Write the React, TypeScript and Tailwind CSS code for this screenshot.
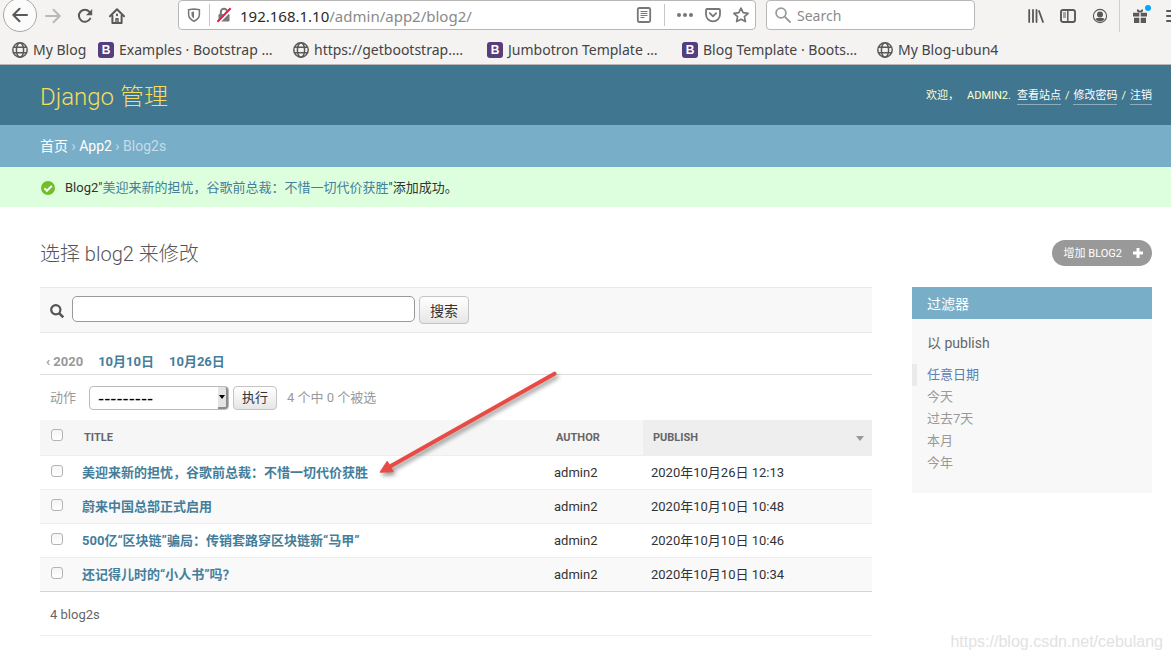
/**
 * Django admin change list, shown inside a browser window.
 */

import React, { useState } from 'react'

interface Bookmark {
    label: string
    icon: 'globe' | 'bootstrap'
    width: string
}

interface BlogRow {
    id: number
    title: string
    author: string
    publish: string
}

const bookmarks: Bookmark[] = [
    { label: 'My Blog', icon: 'globe', width: 'w-[86px]' },
    { label: 'Examples · Bootstrap …', icon: 'bootstrap', width: 'w-[195px]' },
    { label: 'https://getbootstrap.…', icon: 'globe', width: 'w-[194px]' },
    { label: 'Jumbotron Template …', icon: 'bootstrap', width: 'w-[195px]' },
    { label: 'Blog Template · Boots…', icon: 'bootstrap', width: 'w-[195px]' },
    { label: 'My Blog-ubun4', icon: 'globe', width: 'w-[130px]' }
]

const rows: BlogRow[] = [
    { id: 4, title: '美迎来新的担忧，谷歌前总裁：不惜一切代价获胜', author: 'admin2', publish: '2020年10月26日 12:13' },
    { id: 3, title: '蔚来中国总部正式启用', author: 'admin2', publish: '2020年10月10日 10:48' },
    { id: 2, title: '500亿“区块链”骗局：传销套路穿区块链新“马甲”', author: 'admin2', publish: '2020年10月10日 10:46' },
    { id: 1, title: '还记得儿时的“小人书”吗？', author: 'admin2', publish: '2020年10月10日 10:34' }
]

const dateFilters = ['任意日期', '今天', '过去7天', '本月', '今年']

const checkboxClass =
    'block size-3 appearance-none rounded-[3px] border border-[#b4b4b4] bg-gradient-to-b from-[#f4f4f4] to-white checked:bg-none checked:bg-[#417690]'

const greyButtonClass =
    'shrink-0 rounded border border-[#c4c4c4] bg-gradient-to-b from-white to-[#e6e6e6] text-[#333]'

function GlobeIcon() {
    return (
        <svg className="size-4 shrink-0" viewBox="0 0 16 16" fill="none" stroke="#5a5957" strokeWidth="1.5">
            <circle cx="8" cy="8" r="7.2" />
            <ellipse cx="8" cy="8" rx="3.6" ry="7.2" />
            <path d="M1.6 5.2h12.8M1.6 10.8h12.8" />
        </svg>
    )
}

function BootstrapIcon() {
    return (
        <span className="flex size-4 shrink-0 items-center justify-center rounded-[3px] bg-[#563d7c] font-['Liberation_Sans'] text-xs leading-4 font-bold text-white">
            B
        </span>
    )
}

function NavButton({ label, children }: { label: string; children: React.ReactNode }) {
    return (
        <button aria-label={label} className="flex h-8 w-8 shrink-0 items-center justify-center">
            {children}
        </button>
    )
}

function BrowserBar() {
    const [search, setSearch] = useState('')

    return (
        <div className="overflow-hidden border-b border-[#b9b6b3] bg-[#f4f3f2] font-['Noto_Sans',sans-serif] text-[#444]">
            {/* Navigation toolbar */}
            <div className="flex h-[34px] items-start">
                <button
                    aria-label="Back"
                    className="-mt-0.5 ml-[3px] flex size-[34px] shrink-0 items-center justify-center rounded-full border border-[#aaa8a5] bg-[#fbfbfb]"
                >
                    <svg className="size-4" viewBox="0 0 16 16" fill="none" stroke="#5a5957" strokeWidth="2" strokeLinecap="round" strokeLinejoin="round">
                        <path d="M15 8H1.5M7.5 1.8 1.3 8l6.2 6.2" />
                    </svg>
                </button>
                <NavButton label="Forward">
                    <svg className="size-4" viewBox="0 0 16 16" fill="none" stroke="#b9b8b6" strokeWidth="2" strokeLinecap="round" strokeLinejoin="round">
                        <path d="M1 8h13.5M8.5 1.8 14.7 8l-6.2 6.2" />
                    </svg>
                </NavButton>
                <NavButton label="Reload">
                    <svg className="size-4" viewBox="0 0 16 16" fill="none" stroke="#5a5957" strokeWidth="2" strokeLinecap="round">
                        <path d="M13.2 10.6A6 6 0 1 1 12.4 3.8" />
                        <path d="M15.2 1v6.2H9z" fill="#5a5957" stroke="none" />
                    </svg>
                </NavButton>
                <NavButton label="Home">
                    <svg className="size-4" viewBox="0 0 16 16" fill="none" stroke="#5a5957" strokeWidth="2" strokeLinecap="round" strokeLinejoin="round">
                        <path d="M1 8.2 8 1.3l7 6.9" />
                        <path d="M3.4 7.8V15h9.2V7.8" />
                        <path d="M7 15v-4.2h2V15" strokeWidth="1.4" />
                        <path d="M8 6.6v.6" />
                    </svg>
                </NavButton>

                <div className="ml-[45px] flex h-[30px] flex-1 items-center rounded border border-[#b9b7b5] bg-white">
                    <svg className="ml-2 size-3.5 shrink-0" viewBox="0 0 14 14" fill="none">
                        <path d="M1.6 1.7C4 1.5 5.5 1 7 .9c1.5.1 3 .6 5.4.8v4.5c0 3.2-2 5.4-5.4 7-3.4-1.6-5.4-3.8-5.4-7z" stroke="#777" strokeWidth="1.5" />
                        <path d="M7 3.6v7c-1.6-1-2.5-2.3-2.5-4.3V4.1z" fill="#777" />
                    </svg>
                    <span className="mr-1.5 ml-2 h-[22px] w-px bg-[#c9c7c5]" />
                    <svg className="size-4 shrink-0" viewBox="0 0 16 16" fill="none">
                        <path d="M4.8 8V5a3.2 3.2 0 0 1 6.4 0v3" stroke="#777" strokeWidth="2" />
                        <rect x="2.5" y="7" width="11" height="7.5" rx="1.2" fill="#777" />
                        <path d="M2 15.5 15.5 1.5" stroke="#fff" strokeWidth="3.4" />
                        <path d="M1.500 14.8 14.6 1.2" stroke="#e8174b" strokeWidth="2" />
                    </svg>
                    <span className="ml-2 flex-1 pt-0.5 text-[15px] leading-5 whitespace-nowrap text-[#8a8a8a]">
                        <span className="text-[#2b2b2b]">192.168.1.10</span>/admin/app2/blog2/
                    </span>
                    <button aria-label="Reader view">
                        <svg className="size-4" viewBox="0 0 16 16" fill="none" stroke="#777">
                            <rect x="1.8" y="1" width="12.4" height="14" rx="1.5" strokeWidth="1.8" />
                            <path d="M4.5 4.5h7M4.5 6.5h7M4.5 8.5h7M4.5 10.5h4" />
                        </svg>
                    </button>
                    <span className="mx-3 h-[22px] w-px bg-[#c9c7c5]" />
                    <button aria-label="Page actions">
                        <svg className="size-4" viewBox="0 0 16 16" fill="#777">
                            <circle cx="2" cy="8" r="2" />
                            <circle cx="8" cy="8" r="2" />
                            <circle cx="14" cy="8" r="2" />
                        </svg>
                    </button>
                    <button aria-label="Save to Pocket" className="ml-3">
                        <svg className="size-4" viewBox="0 0 16 16" fill="none" stroke="#777" strokeWidth="1.8" strokeLinecap="round" strokeLinejoin="round">
                            <path d="M2.2 2h11.6c.7 0 1.2.5 1.2 1.2V7.5a7 6.8 0 0 1-14 0V3.2C1 2.5 1.5 2 2.2 2z" />
                            <path d="M4.8 6.2 8 9.3l3.2-3.1" />
                        </svg>
                    </button>
                    <button aria-label="Bookmark this page" className="mr-1.5 ml-3">
                        <svg className="size-4" viewBox="0 0 16 16" fill="none" stroke="#777" strokeWidth="1.7" strokeLinejoin="round">
                            <path d="m8 1.1 2.1 4.6 5 .6-3.7 3.4 1 4.9L8 12.2l-4.4 2.4 1-4.9L.9 6.3l5-.6z" />
                        </svg>
                    </button>
                </div>

                <label className="ml-2.5 flex h-[30px] w-[209px] shrink-0 items-center rounded border border-[#b9b7b5] bg-white pl-2">
                    <svg className="size-4 shrink-0" viewBox="0 0 16 16" fill="none" stroke="#9a9a9a" strokeWidth="1.8" strokeLinecap="round">
                        <circle cx="6" cy="6" r="4.9" />
                        <path d="m9.7 9.7 5.3 5.3" />
                    </svg>
                    <input
                        type="text"
                        aria-label="Search"
                        placeholder="Search"
                        value={search}
                        onChange={e => setSearch(e.target.value)}
                        className="ml-1.5 w-full min-w-0 bg-transparent pt-0.5 text-sm leading-5 outline-none placeholder:text-[#8a8a8a]"
                    />
                </label>

                <div className="ml-[45px] flex shrink-0 items-start">
                    <NavButton label="Library">
                        <svg className="size-4" viewBox="0 0 16 16" fill="none" stroke="#5a5957" strokeWidth="1.8" strokeLinecap="round">
                            <path d="M1.2 2v12M5 2v12M8.5 2v12M11 3l4 11" />
                        </svg>
                    </NavButton>
                    <NavButton label="Sidebars">
                        <svg className="size-4" viewBox="0 0 16 16" fill="none" stroke="#5a5957">
                            <rect x="1" y="2" width="14" height="12" rx="2" strokeWidth="1.9" />
                            <path d="M7.8 2v12" strokeWidth="1.5" />
                            <path d="M3 5h3M3 7h3M3 9h3" />
                        </svg>
                    </NavButton>
                    <NavButton label="Account">
                        <svg className="size-4" viewBox="0 0 16 16" fill="#5a5957">
                            <circle cx="8" cy="8" r="6.6" fill="none" stroke="#5a5957" strokeWidth="1.1" />
                            <circle cx="8" cy="6.4" r="3" />
                            <path d="M3.4 11c1-1.3 2.600-1 4.600-1s3.600-.3 4.600 1c-1 1.500-2.600 2.400-4.600 2.400S4.400 12.500 3.400 11z" />
                        </svg>
                    </NavButton>
                    <span className="mr-1 ml-[3px] h-8 w-px bg-[#d2d0ce]" />
                    <button aria-label="What's new" className="relative flex size-8 items-center justify-center">
                        <svg className="size-4" viewBox="0 0 16 16" fill="#5a5957">
                            <path d="M1 4.800h6.300v3.700H1zM8.700 4.800H15v3.700H8.700zM2 9.800h5.300V15H2zM8.700 9.800H14V15H8.700z" />
                            <path d="M7.500 4.500C4.500 4.500 4.200 1 6 1.200L8 3l2-1.800c1.800-.2 1.500 3.300-1.500 3.300z" />
                        </svg>
                        <span className="absolute top-[5px] right-[5px] size-1.5 rounded-full bg-[#00a7ff]" />
                    </button>
                    <button aria-label="Menu" className="flex h-8 w-[15px] items-center overflow-hidden pl-2.5">
                        <svg className="size-4 shrink-0" viewBox="0 0 16 16" fill="none" stroke="#5a5957" strokeWidth="2" strokeLinecap="round">
                            <path d="M1 3h14M1 8h14M1 13h14" />
                        </svg>
                    </button>
                </div>
            </div>

            {/* Bookmarks toolbar */}
            <nav className="flex h-[30px] items-center pt-0.5 pl-3 text-sm leading-5">
                {bookmarks.map(bookmark => (
                    <a key={bookmark.label} href="#" className={`flex shrink-0 items-center gap-[5px] whitespace-nowrap ${bookmark.width}`}>
                        {bookmark.icon === 'globe' ? <GlobeIcon /> : <BootstrapIcon />}
                        <span>{bookmark.label}</span>
                    </a>
                ))}
            </nav>
        </div>
    )
}

function FilterPanel() {
    return (
        <aside className="w-60 shrink-0 self-start bg-[#f8f8f8] pb-[19px]">
            <h2 className="bg-[#79aec8] px-[15px] pt-0.5 text-sm leading-[30px] text-white">过滤器</h2>
            <h3 className="px-[15px] pt-3.5 pb-2.5 text-sm leading-5 text-[#666]">以 publish</h3>
            <ul className="pt-px text-[13px] leading-[22px]">
                {dateFilters.map((name, i) => (
                    <li key={name} className={i === 0 ? 'border-l-[5px] border-[#eaeaea] pl-2.5' : 'pl-[15px]'}>
                        <a href="#" className={i === 0 ? 'text-[#5b80b2]' : 'text-[#999]'}>{name}</a>
                    </li>
                ))}
            </ul>
        </aside>
    )
}

function ResultTable() {
    const [selected, setSelected] = useState<number[]>([])

    const toggle = (id: number) => {
        setSelected(prev => (prev.includes(id) ? prev.filter(x => x !== id) : [...prev, id]))
    }

    return (
        <>
            {/* Actions */}
            <div className="flex h-[45px] items-center pl-2.5 text-[13px] leading-5 text-[#999]">
                <label htmlFor="action">动作</label>
                <div className="relative ml-[13px]">
                    <select
                        id="action"
                        className="block h-6 w-[140px] appearance-none rounded border border-[#bbb] bg-white pl-2 font-['DejaVu_Sans'] text-[17px] leading-5 text-black"
                    >
                        <option>---------</option>
                        <option>删除所选的 blog2s</option>
                    </select>
                    <span className="pointer-events-none absolute top-px right-px flex h-[22px] w-2.5 items-center justify-center rounded-r-[3px] border-r-2 border-b-2 border-[#8c8c8c] bg-[#e4e4e4]">
                        <svg className="h-1 w-1.5" viewBox="0 0 6 4">
                            <path d="M0 0h6L3 4z" />
                        </svg>
                    </span>
                </div>
                <button className={`mx-1 h-6 w-11 text-[13px] leading-5 ${greyButtonClass}`}>执行</button>
                <span className="ml-1.5">4 个中 {selected.length} 个被选</span>
            </div>

            <table className="w-full table-fixed border-collapse text-left text-[13px] leading-5 text-[#333]">
                <thead>
                    <tr className="h-[35px] border-b border-[#eee] bg-[#f6f6f6] text-[11px] text-[#666]">
                        <th className="w-[34px] pb-1 pl-[11px]">
                            <input
                                type="checkbox"
                                aria-label="全选"
                                className={checkboxClass}
                                checked={selected.length === rows.length}
                                onChange={e => setSelected(e.target.checked ? rows.map(r => r.id) : [])}
                            />
                        </th>
                        <th className="px-2.5 pt-0.5 font-bold">TITLE</th>
                        <th className="w-[97px] px-2.5 pt-0.5 font-bold">AUTHOR</th>
                        <th className="w-[229px] bg-[#eee] pt-0.5 pr-[7px] pl-2.5 font-bold">
                            <span className="flex items-center justify-between">
                                PUBLISH
                                <svg className="h-[5px] w-2.5" viewBox="0 0 10 5">
                                    <path d="M1 0h8L5 5z" fill="#999" />
                                </svg>
                            </span>
                        </th>
                    </tr>
                </thead>
                <tbody>
                    {rows.map(row => (
                        <tr key={row.id} className="h-[34px] border-b border-[#eee] even:bg-[#f9f9f9] last:border-[#d4d4d4]">
                            <td className="pb-0.5 pl-[11px]">
                                <input
                                    type="checkbox"
                                    aria-label={row.title}
                                    className={checkboxClass}
                                    checked={selected.includes(row.id)}
                                    onChange={() => toggle(row.id)}
                                />
                            </td>
                            <th className="px-2 pt-0.5 font-bold">
                                <a href="#" className="text-[#447e9b]">{row.title}</a>
                            </th>
                            <td className="px-2 pt-0.5">{row.author}</td>
                            <td className="px-2 pt-0.5">{row.publish}</td>
                        </tr>
                    ))}
                </tbody>
            </table>

            <p className="border-b border-[#eee] px-2.5 pt-[13px] pb-2.5 text-[13px] leading-5 text-[#666]">4 blog2s</p>
        </>
    )
}

function ArrowMark() {
    return (
        <svg className="pointer-events-none absolute top-20 left-[330px] h-[115px] w-[200px] drop-shadow-[2px_3px_2px_rgba(0,0,0,0.4)]" viewBox="0 0 200 115">
            <path d="M184.5 6.7 20 99.5" stroke="#e94b44" strokeWidth="4" strokeLinecap="round" />
            <path d="M10 105.2 17.2 94.2 23.2 104.7z" fill="#e94b44" stroke="#e94b44" strokeLinejoin="round" />
        </svg>
    )
}

export default function App() {
    const [query, setQuery] = useState('')

    return (
        <div className="relative min-h-screen bg-white font-[Roboto,'Noto_Sans_CJK_SC',sans-serif] text-[13px] text-[#333]">
            <BrowserBar />

            <header className="flex h-[60px] items-center justify-between bg-[#417690] pt-0.5 pr-[19px] pl-10">
                <h1 className="pt-0.5 text-2xl font-light text-[#f5dd5d]">
                    <a href="#">Django 管理</a>
                </h1>
                <div className="flex items-center gap-1 text-[11px] leading-4 text-[#ffc]">
                    <span className="mr-1">欢迎，</span>
                    <span className="mr-0.5">ADMIN2.</span>
                    <a href="#" className="border-b border-white/40 text-white">查看站点</a>
                    <span>/</span>
                    <a href="#" className="border-b border-white/40 text-white">修改密码</a>
                    <span>/</span>
                    <a href="#" className="border-b border-white/40 text-white">注销</a>
                </div>
            </header>

            <nav className="bg-[#79aec8] px-10 pt-[11px] pb-[11px] text-sm leading-5 text-[#c4dce8]">
                <a href="#" className="text-white">首页</a> › <a href="#" className="text-white">App2</a> › Blog2s
            </nav>

            <div className="flex h-10 items-center gap-2.5 bg-[#dfd] px-10 pt-0.5 text-[13px] leading-5">
                <svg className="ml-px size-3.5 shrink-0" viewBox="0 0 14 14" fill="none">
                    <circle cx="7" cy="7" r="7" fill="#70bf2b" />
                    <path d="m3.4 7.2 2.6 2.6 4.8-4.9" stroke="#fff" strokeWidth="2" />
                </svg>
                <p>
                    Blog2"<a href="#" className="text-[#447e9b]">美迎来新的担忧，谷歌前总裁：不惜一切代价获胜</a>"添加成功。
                </p>
            </div>

            <main className="pt-[33px] pr-[19px] pb-6 pl-10">
                <div className="flex items-center justify-between">
                    <h1 className="pt-0.5 text-xl leading-6 font-light text-[#555]">选择 blog2 来修改</h1>
                    <a href="#" className="flex h-[26px] items-center gap-2.5 rounded-full bg-[#999] pr-2 pl-3 text-[11px] text-white">
                        <span className="pt-0.5">增加 BLOG2</span>
                        <svg className="size-3" viewBox="0 0 12 12" stroke="#fff" strokeWidth="3">
                            <path d="M6 1v10M1 6h10" />
                        </svg>
                    </a>
                </div>

                <div className="relative mt-[21px] flex gap-10">
                    <div className="min-w-0 flex-1">
                        {/* Search */}
                        <form
                            onSubmit={e => e.preventDefault()}
                            className="flex h-[46px] items-start border-y border-[#eaeaea] bg-[#f8f8f8] pt-2 pl-2.5"
                        >
                            <label htmlFor="searchbar" className="mt-2 mr-2">
                                <svg className="size-3.5" viewBox="0 0 14 14" fill="none" stroke="#555">
                                    <circle cx="5.8" cy="5.8" r="4.6" strokeWidth="2.2" />
                                    <path d="m9.3 9.3 4 4" strokeWidth="2.6" />
                                </svg>
                            </label>
                            <input
                                id="searchbar"
                                type="text"
                                value={query}
                                onChange={e => setQuery(e.target.value)}
                                className="h-[26px] w-[343px] rounded-[5px] border border-[#999] bg-white px-1.5 text-[13px] outline-none"
                            />
                            <button className={`ml-1 h-7 w-[50px] pt-0.5 text-sm leading-5 ${greyButtonClass}`}>搜索</button>
                        </form>

                        {/* Date hierarchy */}
                        <nav className="flex gap-[15px] border-b border-[#ddd] pt-[19px] pb-0.5 pl-1.5 text-[13px] leading-5 font-bold text-[#447e9b]">
                            <a href="#" className="text-[#999]">‹ 2020</a>
                            <a href="#">10月10日</a>
                            <a href="#">10月26日</a>
                        </nav>

                        <ResultTable />
                    </div>

                    <FilterPanel />
                    <ArrowMark />
                </div>
            </main>

            <span className="absolute right-2 bottom-2 font-['Liberation_Sans'] text-base leading-5 text-[#e2e2e2]">https://blog.csdn.net/cebulang</span>
        </div>
    )
}
